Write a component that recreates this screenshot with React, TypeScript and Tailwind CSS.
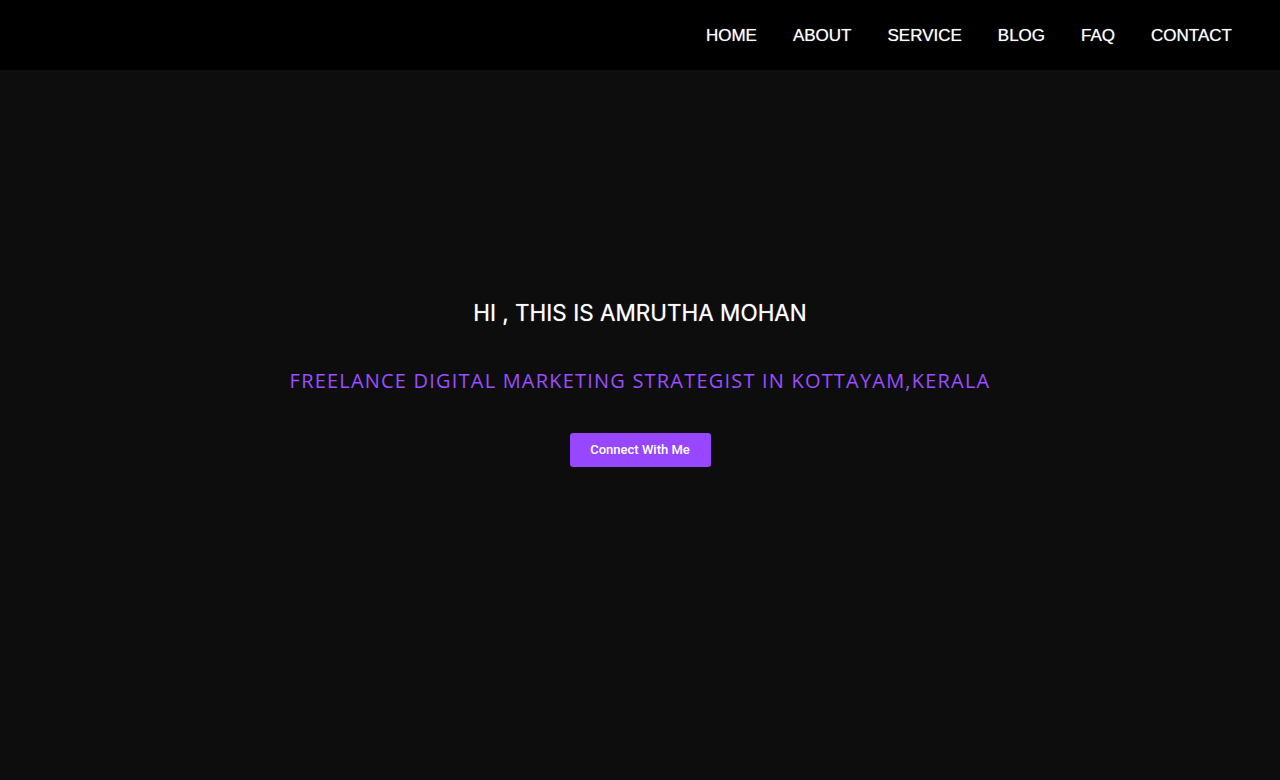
export default function App() {
  const links = ["HOME", "ABOUT", "SERVICE", "BLOG", "FAQ", "CONTACT"];

  return (
    <div className="min-h-screen w-full bg-[#0d0d0d] flex flex-col">
      <header className="h-[70px] w-full bg-black flex items-center justify-end pr-[48px] pt-[2px] shrink-0">
        <nav className="flex items-center gap-[36px]">
          {links.map((l) => (
            <a
              key={l}
              href="#"
              className="text-white text-[17px] font-['Liberation_Sans',Arial,sans-serif] [text-shadow:0_0_1px_#9ca3af]"
            >
              {l}
            </a>
          ))}
        </nav>
      </header>
      <main className="flex flex-col items-center pt-[227px]">
        <h1 className="text-white text-[22.5px] leading-[32px] font-['Inter',sans-serif] font-normal [text-shadow:0_0_1px_#9ca3af]">
          HI , THIS IS AMRUTHA MOHAN
        </h1>
        <h2 className="mt-[38px] text-[#9b4dff] text-[20px] leading-[28px] font-medium tracking-[1.2px] font-['Open_Sans',sans-serif]">
          FREELANCE DIGITAL MARKETING STRATEGIST IN KOTTAYAM,KERALA
        </h2>
        <button className="mt-[38px] h-[34px] w-[141px] rounded-[3px] bg-[#9747ff] text-white text-[13px] font-medium font-['Roboto',sans-serif]">
          Connect With Me
        </button>
      </main>
    </div>
  );
}
